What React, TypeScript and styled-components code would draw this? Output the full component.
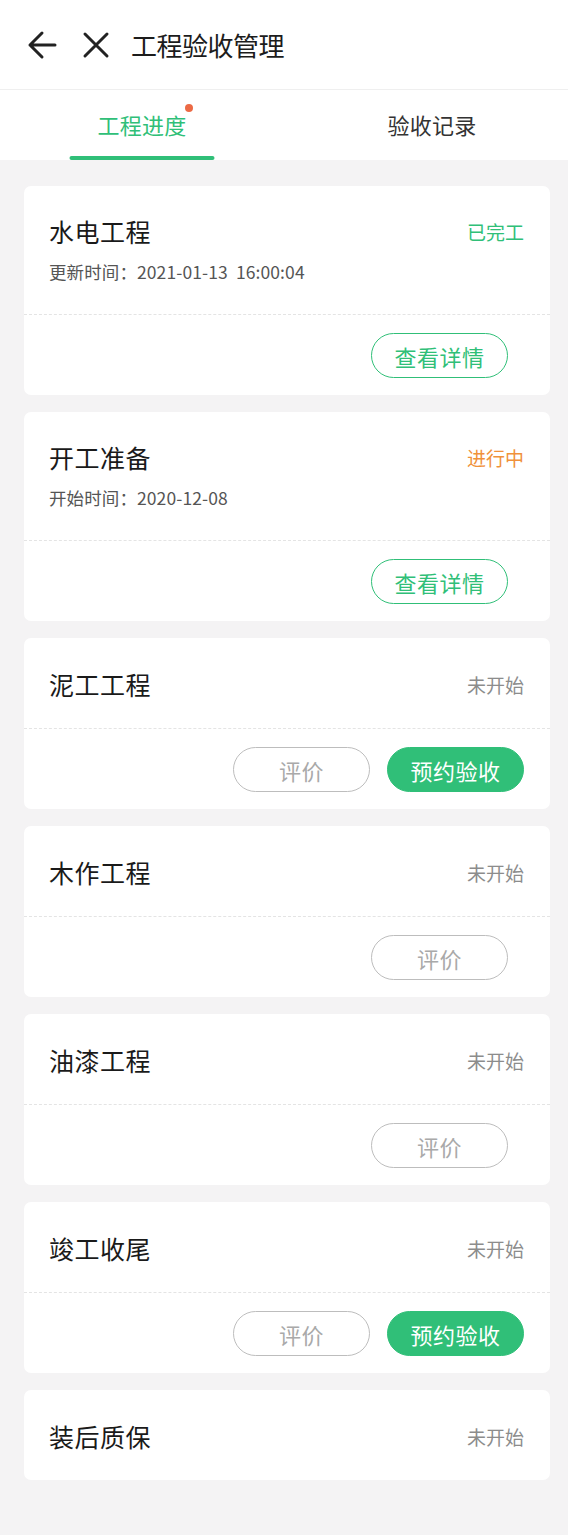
import React, { useState } from "react";
import styled, { createGlobalStyle } from "styled-components";

const GREEN = "#30bf78";

const GlobalStyle = createGlobalStyle`
  html, body {
    margin: 0;
    padding: 0;
    background: #f4f3f4;
    font-family: "Noto Sans CJK SC", "Noto Sans", sans-serif;
  }
  * {
    box-sizing: border-box;
  }
`;

const Page = styled.div`
  min-height: 1535px;
  background: #f4f3f4;
`;

const Header = styled.div`
  height: 89px;
  background: #fff;
  display: flex;
  align-items: center;
  padding-left: 27px;
`;

const IconBtn = styled.div`
  width: 30px;
  height: 30px;
  display: flex;
  align-items: center;
  justify-content: center;
  margin-right: 24px;
  color: #222;
`;

const HeaderTitle = styled.div`
  font-size: 26px;
  color: #1c1c1c;
  margin-left: -4px;
  letter-spacing: -0.5px;
`;

const TabBar = styled.div`
  height: 71px;
  background: #fff;
  border-top: 1px solid #efefef;
  display: grid;
  grid-template-columns: 1fr 1fr;
`;

const Tab = styled.div<{ $active?: boolean; $shift?: number }>`
  position: relative;
  display: flex;
  align-items: center;
  justify-content: center;
  padding-left: ${(p) => p.$shift ?? 0}px;
  font-size: 22px;
  color: ${(p) => (p.$active ? GREEN : "#333")};
  cursor: pointer;

  &::after {
    content: "";
    display: ${(p) => (p.$active ? "block" : "none")};
    position: absolute;
    bottom: 0;
    left: 50%;
    transform: translateX(-50%);
    width: 145px;
    height: 4px;
    border-radius: 2px;
    background: ${GREEN};
  }
`;

const TabLabel = styled.span`
  position: relative;
  margin-top: -3px;
  letter-spacing: 0.3px;
`;

const Dot = styled.span`
  position: absolute;
  top: -4px;
  right: -6px;
  width: 8px;
  height: 8px;
  border-radius: 50%;
  background: #ec6a45;
`;

const List = styled.div`
  padding: 26px 18px 40px 24px;
  display: flex;
  flex-direction: column;
  gap: 17px;
`;

const Card = styled.div`
  background: #fff;
  border-radius: 7px;
  overflow: hidden;
`;

const Top = styled.div<{ $sub?: boolean }>`
  padding: ${(p) => (p.$sub ? "28px 26px 30px 25px" : "29px 26px 27px 25px")};
  display: flex;
  flex-direction: column;
  gap: 12px;
`;

const TitleRow = styled.div`
  display: flex;
  align-items: center;
  justify-content: space-between;
  height: 34px;
`;

const CardTitle = styled.div`
  font-size: 25px;
  color: #1a1a1a;
  letter-spacing: 0.5px;
`;

const Status = styled.div<{ $tone: Tone }>`
  font-size: 19px;
  color: ${(p) =>
    p.$tone === "done" ? GREEN : p.$tone === "doing" ? "#f0913a" : "#8c8c8c"};
`;

const Sub = styled.div`
  font-size: 17.5px;
  line-height: 24px;
  color: #555;
  letter-spacing: 0.1px;
  white-space: pre;
`;

const Footer = styled.div<{ $inset?: boolean }>`
  border-top: 1px dashed #e4e4e4;
  padding: 18px ${(p) => (p.$inset ? "42px" : "26px")} 17px 26px;
  display: flex;
  justify-content: flex-end;
  gap: 17px;
`;

const Btn = styled.div<{ $kind: "outline" | "ghost" | "solid" }>`
  width: 137px;
  height: 45px;
  border-radius: 23px;
  display: flex;
  align-items: center;
  justify-content: center;
  font-size: 22px;
  letter-spacing: 0.5px;
  border: 1.5px solid ${(p) => (p.$kind === "ghost" ? "#bdbdbd" : GREEN)};
  background: ${(p) => (p.$kind === "solid" ? GREEN : "#fff")};
  color: ${(p) =>
    p.$kind === "solid" ? "#fff" : p.$kind === "ghost" ? "#a9a9a9" : GREEN};
`;

type Tone = "done" | "doing" | "todo";

interface Item {
  title: string;
  status: string;
  tone: Tone;
  sub?: string;
  buttons: { label: string; kind: "outline" | "ghost" | "solid" }[];
}

const items: Item[] = [
  {
    title: "水电工程",
    status: "已完工",
    tone: "done",
    sub: "更新时间：2021-01-13  16:00:04",
    buttons: [{ label: "查看详情", kind: "outline" }],
  },
  {
    title: "开工准备",
    status: "进行中",
    tone: "doing",
    sub: "开始时间：2020-12-08",
    buttons: [{ label: "查看详情", kind: "outline" }],
  },
  {
    title: "泥工工程",
    status: "未开始",
    tone: "todo",
    buttons: [
      { label: "评价", kind: "ghost" },
      { label: "预约验收", kind: "solid" },
    ],
  },
  {
    title: "木作工程",
    status: "未开始",
    tone: "todo",
    buttons: [{ label: "评价", kind: "ghost" }],
  },
  {
    title: "油漆工程",
    status: "未开始",
    tone: "todo",
    buttons: [{ label: "评价", kind: "ghost" }],
  },
  {
    title: "竣工收尾",
    status: "未开始",
    tone: "todo",
    buttons: [
      { label: "评价", kind: "ghost" },
      { label: "预约验收", kind: "solid" },
    ],
  },
  {
    title: "装后质保",
    status: "未开始",
    tone: "todo",
    buttons: [],
  },
];

function BackIcon() {
  return (
    <svg width="30" height="30" viewBox="0 0 30 30" fill="none">
      <path
        d="M3 15H28M15 3L3 15L15 27"
        stroke="currentColor"
        strokeWidth="3"
        strokeLinecap="round"
        strokeLinejoin="round"
      />
    </svg>
  );
}

function CloseIcon() {
  return (
    <svg width="28" height="28" viewBox="0 0 28 28" fill="none">
      <path
        d="M3 3L25 25M25 3L3 25"
        stroke="currentColor"
        strokeWidth="3"
        strokeLinecap="round"
      />
    </svg>
  );
}

function App() {
  const [tab, setTab] = useState(0);

  return (
    <Page>
      <GlobalStyle />
      <Header>
        <IconBtn>
          <BackIcon />
        </IconBtn>
        <IconBtn>
          <CloseIcon />
        </IconBtn>
        <HeaderTitle>工程验收管理</HeaderTitle>
      </Header>
      <TabBar>
        <Tab $active={tab === 0} onClick={() => setTab(0)}>
          <TabLabel>
            工程进度
            <Dot />
          </TabLabel>
        </Tab>
        <Tab $active={tab === 1} $shift={12} onClick={() => setTab(1)}>
          <TabLabel>验收记录</TabLabel>
        </Tab>
      </TabBar>
      <List>
        {items.map((it) => (
          <Card key={it.title}>
            <Top $sub={!!it.sub}>
              <TitleRow>
                <CardTitle>{it.title}</CardTitle>
                <Status $tone={it.tone}>{it.status}</Status>
              </TitleRow>
              {it.sub && <Sub>{it.sub}</Sub>}
            </Top>
            {it.buttons.length > 0 && (
              <Footer $inset={it.buttons.length === 1}>
                {it.buttons.map((b) => (
                  <Btn key={b.label} $kind={b.kind}>
                    {b.label}
                  </Btn>
                ))}
              </Footer>
            )}
          </Card>
        ))}
      </List>
    </Page>
  );
}

export default App;
